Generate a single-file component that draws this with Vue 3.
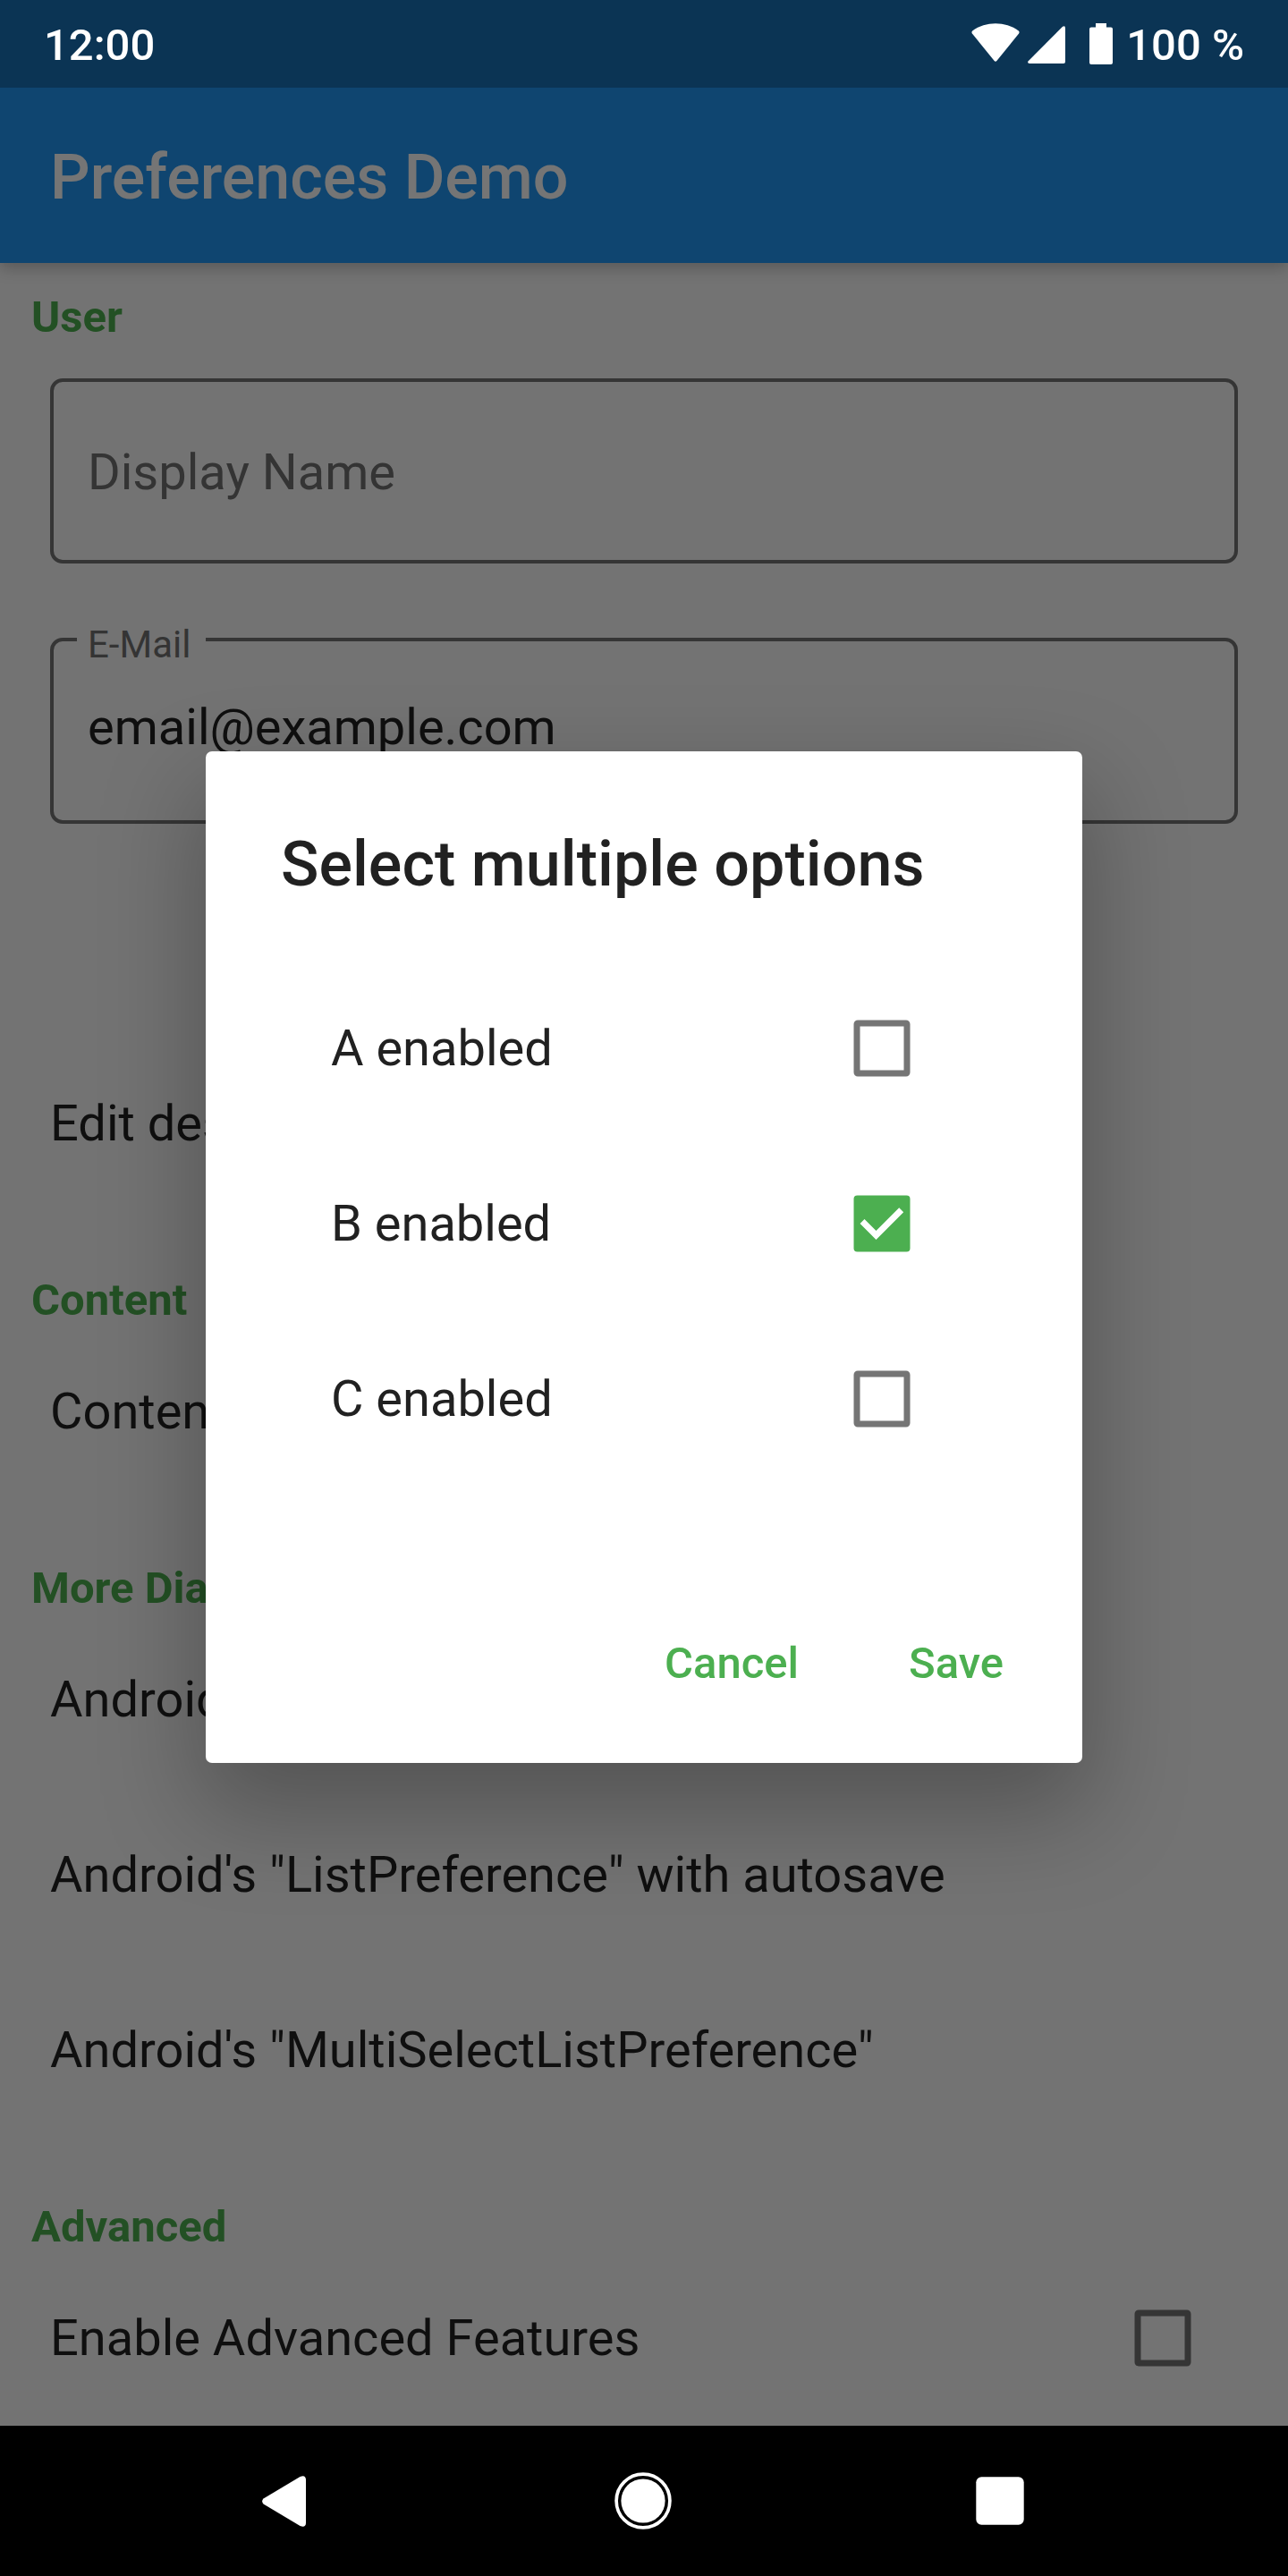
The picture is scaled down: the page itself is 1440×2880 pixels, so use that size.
<script setup>
import { ref } from 'vue'

const options = ref([
  { label: 'A enabled', checked: false },
  { label: 'B enabled', checked: true },
  { label: 'C enabled', checked: false },
])
const sections = [
  { title: 'Content', items: [{ label: 'Content Preferences' }] },
  {
    title: 'More Dialogs',
    items: [
      { label: 'Android\'s "ListPreference"' },
      { label: 'Android\'s "ListPreference" with autosave' },
      { label: 'Android\'s "MultiSelectListPreference"' },
    ],
  },
  { title: 'Advanced', items: [{ label: 'Enable Advanced Features', checkbox: true }] },
]
</script>

<template>
  <div class="screen">
    <header class="status">
      <span>12:00</span>
      <div class="status-right">
        <svg class="wifi" width="54" height="43" viewBox="0 0 54 43">
          <path d="M1.2 8.4 C16 -2.5 38 -2.5 52.8 8.4 Q54.2 9.8 53.1 11.4 L28.6 41.8 Q27 43.6 25.4 41.8 L.9 11.4 Q-.2 9.8 1.2 8.4Z" fill="#fff" />
        </svg>
        <svg class="signal" width="42" height="42" viewBox="0 0 42 42">
          <path d="M39 .8 Q42 -1 42 2.5 V40 Q42 42 40 42 H2 Q-1 42 .7 39.2Z" fill="#fff" />
        </svg>
        <svg class="battery" width="26" height="46" viewBox="0 0 26 46">
          <path d="M7 0H19V4.5H24Q26 4.5 26 6.5V44Q26 46 24 46H2Q0 46 0 44V6.5Q0 4.5 2 4.5H7Z" fill="#fff" />
        </svg>
        <span>100 %</span>
      </div>
    </header>

    <div class="app">
      <div class="appbar">Preferences Demo</div>
      <main class="list">
        <h2 class="heading first">User</h2>
        <div class="field"><span>Display Name</span></div>
        <fieldset class="field filled">
          <legend><span>E-Mail</span></legend>
          <span class="value">email@example.com</span>
        </fieldset>
        <div class="row edit">Edit description</div>
        <template v-for="s in sections" :key="s.title">
          <h2 class="heading">{{ s.title }}</h2>
          <div v-for="i in s.items" :key="i.label" class="row">
            <span>{{ i.label }}</span>
            <svg v-if="i.checkbox" class="box" width="64" height="64" viewBox="0 0 64 64">
              <rect x="4" y="4" width="56" height="56" rx="1" fill="none" stroke="#757575" stroke-width="7" stroke-linejoin="round" />
            </svg>
          </div>
        </template>
      </main>

      <div class="scrim">
        <section class="dialog">
          <h1>Select multiple options</h1>
          <div class="options">
            <div v-for="o in options" :key="o.label" class="row" @click="o.checked = !o.checked">
              <span>{{ o.label }}</span>
              <svg class="box" width="64" height="64" viewBox="0 0 64 64">
                <template v-if="o.checked">
                  <rect x=".5" y=".5" width="63" height="63" rx="4" fill="#4caf50" />
                  <path d="M10 29.500 L25.500 45 L53.700 16.800" fill="none" stroke="#fff" stroke-width="7" />
                </template>
                <rect v-else x="4" y="4" width="56" height="56" rx="1" fill="none" stroke="#757575" stroke-width="7" stroke-linejoin="round" />
              </svg>
            </div>
          </div>
          <div class="actions">
            <span>Cancel</span>
            <span>Save</span>
          </div>
        </section>
      </div>
    </div>

    <nav class="nav">
      <svg width="49" height="57" viewBox="0 0 49 57">
        <path d="M1.5 25.5 L42.5 1 Q48.500 -1.500 49 4 V53 Q48.500 58.500 42.500 56 L1.500 31.500 Q-1.200 28.500 1.500 25.500Z" fill="#fff" />
      </svg>
      <svg class="home" width="64" height="64" viewBox="0 0 64 64">
        <circle cx="32" cy="32" r="29.900" fill="none" stroke="#fff" stroke-width="3.700" />
        <circle cx="32" cy="32" r="24.600" fill="#fff" />
      </svg>
      <svg width="54" height="54" viewBox="0 0 54 54">
        <rect x=".3" y=".3" width="53.400" height="53.400" rx="6" fill="#fff" />
      </svg>
    </nav>
  </div>
</template>

<style>
body {
  margin: 0;
}
</style>

<style scoped>
.screen {
  width: 1440px;
  height: 2880px;
  display: flex;
  flex-direction: column;
  overflow: hidden;
  font-family: Roboto, sans-serif;
  background: #000;
}
.status {
  position: relative;
  z-index: 3;
  flex: none;
  box-sizing: border-box;
  height: 98px;
  padding: 0 49px;
  display: flex;
  justify-content: space-between;
  background: #0b3454;
  color: #fff;
  font-size: 49px;
  font-weight: 500;
  line-height: 102px;
}
.status-right {
  display: flex;
  align-items: flex-start;
}
.wifi {
  margin: 26px 9px 0 0;
}
.signal {
  margin: 29px 27px 0 0;
}
.battery {
  margin: 26px 15px 0 0;
}
.app {
  position: relative;
  flex: none;
  height: 2614px;
  display: flex;
  flex-direction: column;
  background: #fafafa;
}
.appbar {
  position: relative;
  flex: none;
  height: 196px;
  padding-left: 56px;
  background: #2196f3;
  color: #fff;
  font-size: 70px;
  font-weight: 500;
  line-height: 200px;
  box-shadow: 0 6px 16px rgba(0, 0, 0, 0.22);
}
.list {
  color: rgba(0, 0, 0, 0.87);
}
.heading {
  box-sizing: border-box;
  height: 126px;
  margin: 0;
  padding: 71px 35px 0;
  color: #4caf50;
  font-size: 49px;
  font-weight: 700;
  line-height: 57px;
}
.heading.first {
  height: 87px;
  padding-top: 32px;
}
.field {
  box-sizing: border-box;
  height: 207px;
  margin: 42px 56px 0;
  padding: 2px 38px 0;
  display: flex;
  align-items: center;
  border: 4px solid #757575;
  border-radius: 14px;
  color: #727272;
  font-size: 56px;
}
.filled {
  display: block;
  height: 227px;
  margin-top: 64px;
  padding: 0 26px;
}
.filled legend {
  height: 42px;
  padding: 0 17px 0 12px;
  font-size: 42px;
  line-height: 42px;
}
.filled legend span {
  display: block;
  padding-top: 6px;
}
.value {
  display: block;
  margin-left: 12px;
  padding-top: 44px;
  line-height: 66px;
  color: #222;
}
.row {
  box-sizing: border-box;
  height: 196px;
  padding: 0 56px;
  display: flex;
  align-items: center;
  justify-content: space-between;
  font-size: 56px;
  white-space: nowrap;
}
.edit {
  margin-top: 237px;
}
.box {
  display: block;
  margin-right: 52px;
}
.scrim {
  position: absolute;
  inset: 0;
  z-index: 2;
  display: flex;
  align-items: center;
  justify-content: center;
  background: rgba(0, 0, 0, 0.54);
}
.dialog {
  box-sizing: border-box;
  width: 980px;
  height: 1131px;
  padding: 85px 84px 0;
  border-radius: 7px;
  background: #fff;
  color: #212121;
  box-shadow: 0 48px 110px 8px rgba(0, 0, 0, 0.27);
}
.dialog h1 {
  margin: 0;
  font-size: 70px;
  font-weight: 500;
  line-height: 82px;
  letter-spacing: 0.05px;
  white-space: nowrap;
}
.options {
  padding-top: 67px;
}
.actions {
  display: flex;
  justify-content: flex-end;
  gap: 123px;
  padding: 169px 4px 0 0;
  color: #4caf50;
  font-size: 49px;
  font-weight: 500;
  line-height: 57px;
}
.nav {
  flex: none;
  box-sizing: border-box;
  height: 168px;
  padding: 0 295px 0 293px;
  display: flex;
  align-items: center;
  justify-content: space-between;
}
.home {
  margin-left: 5px;
}
</style>
